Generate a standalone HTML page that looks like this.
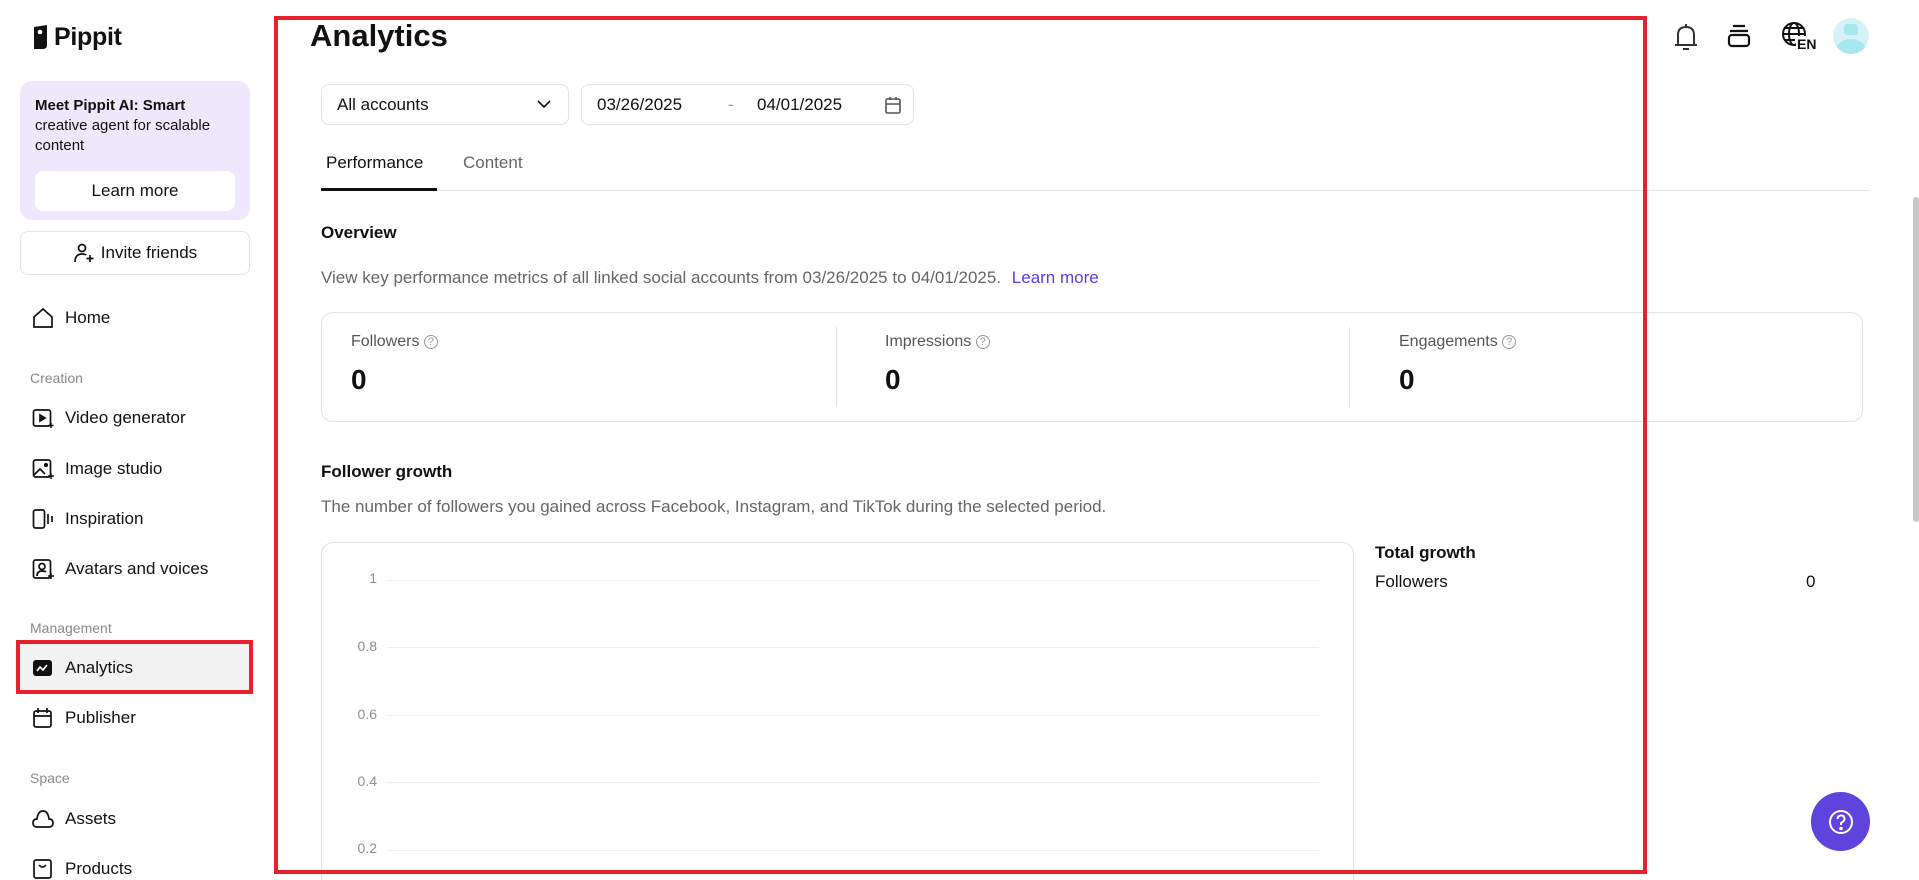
<!DOCTYPE html>
<html><head><meta charset="utf-8"><style>
*{box-sizing:border-box;margin:0;padding:0}
html{width:1919px;height:880px;overflow:hidden}
body{width:1919px;height:880px;overflow:hidden;background:#fff;font-family:"Liberation Sans",Arial,sans-serif;color:#111;position:relative}
.a{position:absolute;white-space:nowrap}
.nav{position:absolute;left:32px;font-size:17px;color:#111;display:flex;align-items:center}
.nav svg{width:22px;height:22px;margin-right:11px}
.lbl{position:absolute;left:30px;font-size:14px;color:#888}
.gl{position:absolute;left:387px;width:932px;height:1px;background:#eee}
.yl{position:absolute;width:50px;left:327px;text-align:right;font-size:14px;color:#8a8f99}
.q{font-size:11px;color:#999;border:1px solid #999;border-radius:50%;display:inline-block;width:14px;height:14px;line-height:12px;text-align:center;vertical-align:1px}
</style></head><body>
<div class="a" style="left:32px;top:23px;display:flex;align-items:center">
<svg width="17" height="25" viewBox="0 0 17 25"><path d="M2 2 L15 0 L15 20 Q15 24 11 24 L2 24 Z" fill="#111"/><circle cx="8" cy="7" r="2.3" fill="#fff"/></svg>
<span style="font-size:25px;font-weight:bold;margin-left:5px;letter-spacing:-0.3px">Pippit</span></div>
<div class="a" style="left:20px;top:81px;width:230px;height:139px;background:#efe8fd;border-radius:12px"></div>
<div class="a" style="left:35px;top:96px;font-size:15px;line-height:20px;color:#111"><b>Meet Pippit AI:</b> <b>Smart</b><br>creative agent for scalable<br>content</div>
<div class="a" style="left:35px;top:171px;width:200px;height:40px;background:#fff;border-radius:8px;text-align:center;line-height:40px;font-size:17px">Learn more</div>
<div class="a" style="left:20px;top:231px;width:230px;height:44px;border:1px solid #e3e3e3;border-radius:8px;display:flex;align-items:center;justify-content:center;font-size:17px">
<svg width="22" height="22" viewBox="0 0 22 22" fill="none" stroke="#111" stroke-width="1.7"><circle cx="9" cy="6" r="3.5"/><path d="M2 20 Q2 12 9 12 Q12 12 13 13"/><path d="M17 13v7M13.5 16.5h7"/></svg><span style="margin-left:6px">Invite friends</span></div>
<div class="nav" style="top:307px"><svg viewBox="0 0 22 22" fill="none" stroke="#111" stroke-width="1.7"><path d="M2 10 L11 2 L20 10 V20 H2 Z"/></svg>Home</div>
<div class="lbl" style="top:370px">Creation</div>
<div class="nav" style="top:407px"><svg viewBox="0 0 22 22" fill="none" stroke="#111" stroke-width="1.7"><rect x="1.5" y="3" width="17" height="16" rx="2"/><path d="M8 8v6l5-3z" fill="#111"/><path d="M19 16v5M16.5 18.5h5" stroke-width="1.5"/></svg>Video generator</div>
<div class="nav" style="top:458px"><svg viewBox="0 0 22 22" fill="none" stroke="#111" stroke-width="1.7"><rect x="1.5" y="2" width="17" height="17" rx="2"/><path d="M2 17 L8 11 L13 16"/><circle cx="14" cy="7" r="1.3" fill="#111"/><path d="M19 15v6M16 18h6" stroke-width="1.5"/></svg>Image studio</div>
<div class="nav" style="top:508px"><svg viewBox="0 0 22 22" fill="none" stroke="#111" stroke-width="1.7"><rect x="1.5" y="2" width="11" height="18" rx="2"/><path d="M16 6v10M20 8v6"/></svg>Inspiration</div>
<div class="nav" style="top:558px"><svg viewBox="0 0 22 22" fill="none" stroke="#111" stroke-width="1.7"><rect x="1.5" y="2" width="17" height="18" rx="2"/><circle cx="10" cy="8.5" r="3"/><path d="M5 18 Q5 13 10 13 Q13 13 14 14"/><path d="M19 15v6M16 18h6" stroke-width="1.5"/></svg>Avatars and voices</div>
<div class="lbl" style="top:620px">Management</div>
<div class="a" style="left:16px;top:640px;width:237px;height:54px;border:4px solid #e8222c;background:#f2f2f2"></div>
<div class="nav" style="top:657px"><svg viewBox="0 0 22 22"><rect x="1" y="3" width="19" height="16" rx="3" fill="#111"/><path d="M5 14 L8 10 L11 13 L15 8" stroke="#fff" stroke-width="1.7" fill="none"/></svg>Analytics</div>
<div class="nav" style="top:707px"><svg viewBox="0 0 22 22" fill="none" stroke="#111" stroke-width="1.7"><rect x="2" y="4" width="17" height="16" rx="2"/><path d="M2 9h17M6 1v5M15 1v5"/></svg>Publisher</div>
<div class="lbl" style="top:770px">Space</div>
<div class="nav" style="top:808px"><svg viewBox="0 0 22 22" fill="none" stroke="#111" stroke-width="1.7"><path d="M5 19 Q1 19 1 15 Q1 11 5 11 Q6 3 11 3 Q16 3 17 11 Q21 11 21 15 Q21 19 17 19 Z"/></svg>Assets</div>
<div class="nav" style="top:858px"><svg viewBox="0 0 22 22" fill="none" stroke="#111" stroke-width="1.7"><rect x="2" y="2" width="17" height="18" rx="2"/><path d="M7 7 Q10.5 11 14 7"/></svg>Products</div>

<div class="a" style="left:310px;top:18px;font-size:31px;font-weight:bold">Analytics</div>
<div class="a" style="left:321px;top:84px;width:248px;height:41px;border:1px solid #e3e3e3;border-radius:8px;font-size:17px;line-height:39px;padding-left:15px">All accounts
<svg style="position:absolute;right:16px;top:14px" width="16" height="10" viewBox="0 0 16 10" fill="none" stroke="#111" stroke-width="1.6"><path d="M2 2l6 6 6-6"/></svg></div>
<div class="a" style="left:581px;top:84px;width:333px;height:41px;border:1px solid #e3e3e3;border-radius:8px;font-size:17px;line-height:39px">
<span class="a" style="left:15px">03/26/2025</span><span class="a" style="left:146px;color:#999">-</span><span class="a" style="left:175px">04/01/2025</span>
<svg style="position:absolute;right:12px;top:12px" width="16" height="17" viewBox="0 0 16 17" fill="none" stroke="#555" stroke-width="1.6"><rect x="1" y="2" width="14" height="14" rx="1.5"/><path d="M1 7h14M5 0v3M11 0v3"/></svg></div>
<div class="a" style="left:326px;top:153px;font-size:17px;color:#111">Performance</div>
<div class="a" style="left:463px;top:153px;font-size:17px;color:#666">Content</div>
<div class="a" style="left:321px;top:190px;width:1549px;height:1px;background:#e3e3e3"></div>
<div class="a" style="left:321px;top:188px;width:116px;height:3px;background:#111"></div>
<div class="a" style="left:321px;top:223px;font-size:17px;font-weight:bold">Overview</div>
<div class="a" style="left:321px;top:268px;font-size:17px;color:#666">View key performance metrics of all linked social accounts from 03/26/2025 to 04/01/2025. <span style="color:#5b3ce8;margin-left:6px">Learn more</span></div>
<div class="a" style="left:321px;top:312px;width:1542px;height:110px;border:1px solid #e3e3e3;border-radius:12px"></div>
<div class="a" style="left:836px;top:327px;width:1px;height:80px;background:#e3e3e3"></div>
<div class="a" style="left:1349px;top:327px;width:1px;height:80px;background:#e3e3e3"></div>
<div class="a" style="left:351px;top:333px;font-size:16px;color:#555">Followers <span class="q">?</span></div>
<div class="a" style="left:885px;top:333px;font-size:16px;color:#555">Impressions <span class="q">?</span></div>
<div class="a" style="left:1399px;top:333px;font-size:16px;color:#555">Engagements <span class="q">?</span></div>
<div class="a" style="left:351px;top:364px;font-size:28px;font-weight:bold">0</div>
<div class="a" style="left:885px;top:364px;font-size:28px;font-weight:bold">0</div>
<div class="a" style="left:1399px;top:364px;font-size:28px;font-weight:bold">0</div>
<div class="a" style="left:321px;top:462px;font-size:17px;font-weight:bold">Follower growth</div>
<div class="a" style="left:321px;top:497px;font-size:17px;color:#666">The number of followers you gained across Facebook, Instagram, and TikTok during the selected period.</div>
<div class="a" style="left:321px;top:542px;width:1033px;height:338px;border:1px solid #e3e3e3;border-bottom:none;border-radius:12px 12px 0 0"></div>
<div class="yl" style="top:570px">1</div><div class="gl" style="top:580px"></div>
<div class="yl" style="top:638px">0.8</div><div class="gl" style="top:647px"></div>
<div class="yl" style="top:706px">0.6</div><div class="gl" style="top:715px"></div>
<div class="yl" style="top:773px">0.4</div><div class="gl" style="top:782px"></div>
<div class="yl" style="top:840px">0.2</div><div class="gl" style="top:850px"></div>
<div class="a" style="left:1375px;top:543px;font-size:17px;font-weight:bold">Total growth</div>
<div class="a" style="left:1375px;top:572px;font-size:17px">Followers</div>
<div class="a" style="left:1806px;top:572px;font-size:17px">0</div>
<div class="a" style="left:274px;top:16px;width:1373px;height:858px;border:4px solid #e8222c"></div>
<svg class="a" style="left:1672px;top:22px" width="28" height="30" viewBox="0 0 28 30" fill="none" stroke="#333" stroke-width="2"><path d="M6 22 V13 Q6 5 14 5 Q22 5 22 13 V22 M3 23h22"/><path d="M11 27h6"/><path d="M14 2v2"/></svg>
<svg class="a" style="left:1725px;top:22px" width="28" height="28" viewBox="0 0 28 28" fill="none" stroke="#111" stroke-width="2.2"><path d="M8 4h12M5 9h18"/><rect x="4" y="13" width="20" height="11" rx="3"/></svg>
<svg class="a" style="left:1780px;top:20px" width="40" height="34" viewBox="0 0 40 34" fill="none" stroke="#111" stroke-width="2"><circle cx="14" cy="14" r="11"/><ellipse cx="14" cy="14" rx="5" ry="11"/><path d="M3 14h22M5 8h18M5 20h10"/></svg>
<div class="a" style="left:1796px;top:36px;font-size:14px;font-weight:bold;background:#fff;padding:0 1px">EN</div>
<div class="a" style="left:1833px;top:18px;width:36px;height:36px;border-radius:50%;background:#d5f3f7;overflow:hidden">
<div class="a" style="left:11px;top:6px;width:14px;height:11px;border-radius:3px;background:#a9e7ef"></div>
<div class="a" style="left:3px;top:21px;width:30px;height:22px;border-radius:50%;background:#a9e7ef"></div></div>
<div class="a" style="left:1913px;top:197px;width:6px;height:325px;border-radius:3px;background:#c8c8c8"></div>
<div class="a" style="left:1811px;top:792px;width:59px;height:59px;border-radius:50%;background:#5e44dc"></div>
<svg class="a" style="left:1827px;top:808px" width="28" height="28" viewBox="0 0 28 28" fill="none" stroke="#fff" stroke-width="2"><circle cx="14" cy="14" r="11"/><path d="M10.5 11 Q10.5 7.5 14 7.5 Q17.5 7.5 17.5 11 Q17.5 13 14 15 V17"/><circle cx="14" cy="20.5" r="0.8" fill="#fff"/></svg>
</body></html>
